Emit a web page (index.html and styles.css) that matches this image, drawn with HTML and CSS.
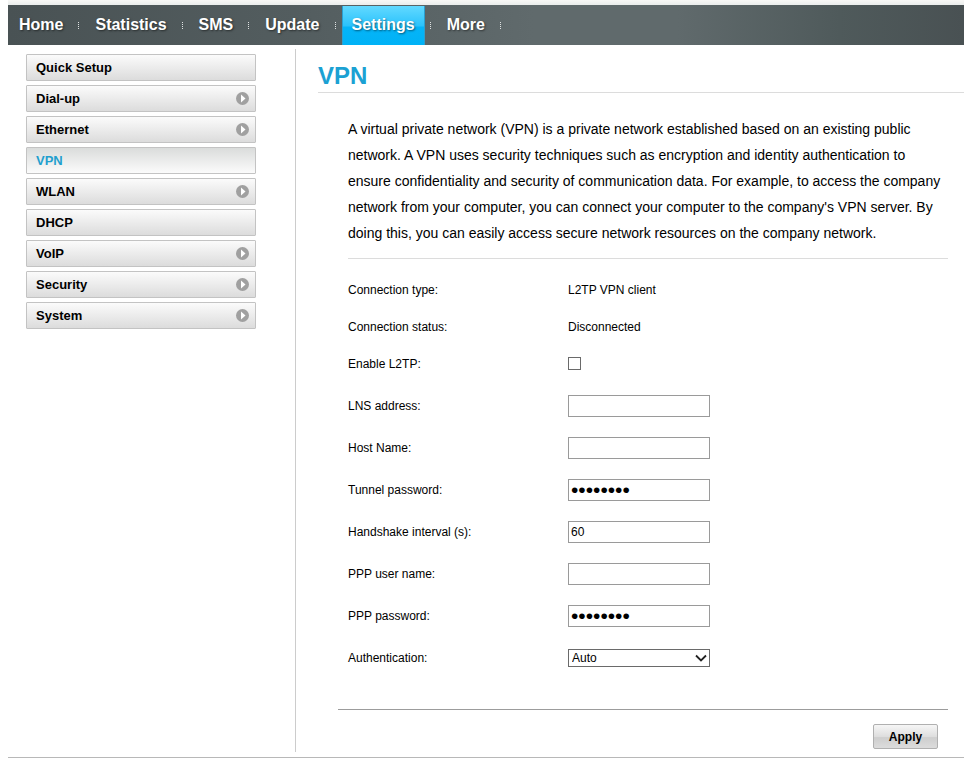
FILE: index.html
```html
<!DOCTYPE html>
<html lang="en">
<head>
  <meta charset="UTF-8" />
  <title>VPN</title>
  <meta name="viewport" content="width=device-width, initial-scale=1" />
  <link rel="stylesheet" href="styles.css">
</head>
<body>
  <svg class="defs" width="0" height="0" aria-hidden="true">
    <symbol id="arrow" viewBox="0 0 13 13">
      <circle cx="6.5" cy="6.5" r="6.5" fill="#a0a0a0" />
      <path d="M5 2.500v8l4.500-4z" fill="#fff" />
    </symbol>
  </svg>

  <div class="page">
    <nav class="menu">
      <a href="#">Home</a><span class="dots"></span>
      <a href="#">Statistics</a><span class="dots"></span>
      <a href="#">SMS</a><span class="dots"></span>
      <a href="#">Update</a><span class="dots"></span>
      <a href="#" class="active">Settings</a><span class="dots"></span>
      <a href="#">More</a><span class="dots"></span>
    </nav>

    <div class="main">
      <nav class="sidebar">
        <a href="#">Quick Setup</a>
        <a href="#">Dial-up<svg class="arrow"><use href="#arrow" /></svg></a>
        <a href="#">Ethernet<svg class="arrow"><use href="#arrow" /></svg></a>
        <a href="#" class="current">VPN</a>
        <a href="#">WLAN<svg class="arrow"><use href="#arrow" /></svg></a>
        <a href="#">DHCP</a>
        <a href="#">VoIP<svg class="arrow"><use href="#arrow" /></svg></a>
        <a href="#">Security<svg class="arrow"><use href="#arrow" /></svg></a>
        <a href="#">System<svg class="arrow"><use href="#arrow" /></svg></a>
      </nav>

      <div class="content">
        <h1>VPN</h1>
        <p class="intro">A virtual private network (VPN) is a private network established based on an existing public network. A VPN uses security techniques such as encryption and identity authentication to ensure confidentiality and security of communication data. For example, to access the company network from your computer, you can connect your computer to the company's VPN server. By doing this, you can easily access secure network resources on the company network.</p>

        <form>
          <div class="status">
            <div class="row"><span>Connection type:</span><span>L2TP VPN client</span></div>
            <div class="row"><span>Connection status:</span><span>Disconnected</span></div>
            <div class="row"><label for="l2tp">Enable L2TP:</label><input type="checkbox" id="l2tp" /></div>
          </div>
          <div class="fields">
            <div class="row"><label for="lns">LNS address:</label><input type="text" id="lns" /></div>
            <div class="row"><label for="host">Host Name:</label><input type="text" id="host" /></div>
            <div class="row"><label for="tunnel">Tunnel password:</label><input type="password" id="tunnel" value="password" /></div>
            <div class="row"><label for="handshake">Handshake interval (s):</label><input type="text" id="handshake" value="60" /></div>
            <div class="row"><label for="user">PPP user name:</label><input type="text" id="user" /></div>
            <div class="row"><label for="ppp">PPP password:</label><input type="password" id="ppp" value="password" /></div>
            <div class="row">
              <label for="auth">Authentication:</label>
              <div class="select">
                <select id="auth"><option>Auto</option></select>
                <svg class="chevron" viewBox="0 0 12 8"><path d="M1 1.500l5 5 5-5" fill="none" stroke="#222" stroke-width="1.800" /></svg>
              </div>
            </div>
          </div>
          <div class="actions">
            <button type="button">Apply</button>
          </div>
        </form>
      </div>
    </div>
  </div>
</body>
</html>
```
FILE: styles.css
```css
* {
  box-sizing: border-box;
}
body {
  margin: 0;
  font-family: Arial, "Liberation Sans", sans-serif;
  font-size: 12px;
  color: #000;
  background: #fff;
}
a {
  text-decoration: none;
}
.defs {
  display: block;
}
.page {
  margin: 0 9px 0 8px;
  padding-top: 5px;
  border-bottom: 1px solid #b8b8b8;
  background: linear-gradient(#f8f8f6, #eaedec) 0 0 / 100% 5px no-repeat;
}

/* top menu */
.menu {
  display: flex;
  height: 40px;
  padding-left: 1px;
  background: linear-gradient(to right, #495254, #535d5f 30%, #606a6c 55%, #606a6c 70%, #4f5a5b 87%, #495153);
}
.menu a {
  margin-top: 1px;
  padding: 0 10px;
  font-size: 16px;
  line-height: 37px;
  font-weight: bold;
  color: #fff;
  text-shadow: 1px 1px 2px rgba(0,0,0,0.5);
}
.menu a.active {
  background: linear-gradient(#62d9ff, #2cc3fc 50%, #05b4f8 55%, #00b2f6);
  box-shadow: inset 1px 0 #2b9fd0, inset -1px 0 #2b9fd0;
}
.dots {
  width: 12px;
  height: 7px;
  margin-top: 17px;
  background: repeating-linear-gradient(#dfe2e2 0 1px, transparent 1px 2px) 5px 0 / 1px 7px no-repeat;
}

/* left menu and content */
.main {
  display: flex;
  padding: 4px 0 5px;
}
.sidebar {
  width: 288px;
  padding: 5px 39px 0 18px;
  border-right: 1px solid #ccc;
}
.sidebar a {
  display: flex;
  align-items: center;
  justify-content: space-between;
  height: 27px;
  margin-bottom: 4px;
  padding: 0 6px 0 9px;
  border: 1px solid #c3c3c3;
  border-radius: 1px;
  background: linear-gradient(#fbfbfb, #dcdcdc);
  font-size: 13px;
  font-weight: bold;
  color: #000;
}
.sidebar a.current {
  background: linear-gradient(#dadcdb, #fbfbfb);
  color: #1f9fce;
}
.arrow {
  width: 13px;
  height: 13px;
}
.content {
  flex: 1;
  padding-left: 22px;
}
h1 {
  margin: 0;
  padding: 12px 0 2px;
  border-bottom: 1px solid #dcdcdc;
  font-size: 24px;
  line-height: 29px;
  color: #1ba1d3;
}
.intro {
  margin: 23px 16px 0 30px;
  padding-bottom: 12px;
  border-bottom: 1px solid #dcdcdc;
  font-size: 14px;
  line-height: 26px;
}

/* form */
form {
  margin: 0 16px 0 20px;
}
.status {
  padding: 12px 10px 0;
}
.fields {
  padding: 3px 10px 30px;
}
.row {
  display: flex;
  align-items: center;
  height: 42px;
}
.status .row {
  height: 37px;
}
.row > :first-child {
  width: 220px;
}
input, select {
  margin: 0;
  border: 1px solid #9a9a9a;
  border-radius: 0;
  background: #fff;
  font-family: inherit;
  font-size: 12px;
  color: #000;
}
input[type="text"], input[type="password"] {
  width: 142px;
  height: 22px;
  padding: 0 2px;
}
input[type="password"] {
  font-size: 21px;
}
input[type="checkbox"] {
  appearance: none;
  width: 13px;
  height: 13px;
  border-color: #6a6a6a;
}
input[type="checkbox"]:checked {
  background: #6a6a6a;
}
.select {
  position: relative;
  width: 142px;
  height: 18px;
}
select {
  display: block;
  appearance: none;
  width: 100%;
  height: 100%;
  padding: 0 3px;
  border-color: #6a6a6a;
}
.chevron {
  position: absolute;
  top: 5px;
  right: 3px;
  width: 12px;
  height: 8px;
  pointer-events: none;
}
.actions {
  padding: 14px 10px 3px;
  border-top: 1px solid #9c9c9c;
  text-align: right;
}
button {
  width: 65px;
  height: 25px;
  padding: 0;
  border: 1px solid #b0b0b0;
  border-radius: 2px;
  background: linear-gradient(#f6f6f6, #dedede 50%, #cecece 55%, #dcdcdc);
  font-family: inherit;
  font-size: 12px;
  font-weight: bold;
  vertical-align: top;
}
```
